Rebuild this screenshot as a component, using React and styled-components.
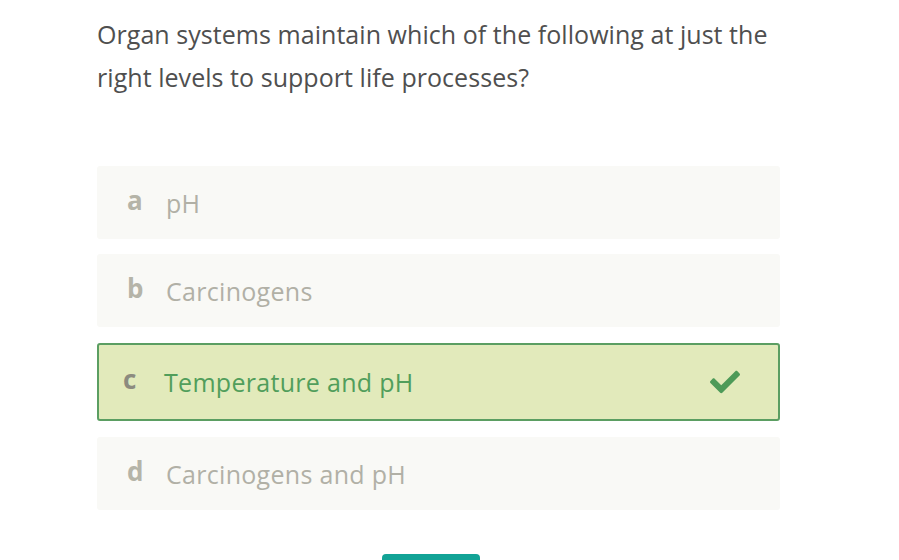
import React from 'react';
import styled, { createGlobalStyle } from 'styled-components';
import { FaCheck } from 'react-icons/fa';

const GlobalStyle = createGlobalStyle`
  html, body {
    margin: 0;
    padding: 0;
    background: #ffffff;
    overflow: hidden;
  }
  body {
    font-family: "Open Sans", Lato, sans-serif;
  }
`;

const Page = styled.div`
  width: 899px;
  height: 560px;
  padding: 13px 0 0 97px;
  box-sizing: border-box;
  position: relative;
  overflow: hidden;
`;

const Question = styled.p`
  margin: 0;
  width: 690px;
  font-size: 25px;
  line-height: 43px;
  letter-spacing: 0.05px;
  color: #4f4f4f;
`;

const Options = styled.ul`
  list-style: none;
  margin: 67px 0 0;
  padding: 0;
  width: 683px;
  display: flex;
  flex-direction: column;
  gap: 15px;
`;

const Option = styled.li`
  display: flex;
  align-items: center;
  box-sizing: border-box;
  height: ${p => (p.$correct ? '78px' : '73px')};
  margin: ${p => (p.$correct ? '1px 0' : '0')};
  padding: ${p => (p.$correct ? '0 38px 0 24px' : '0 30px 0 30px')};
  border-radius: 3px;
  background: ${p => (p.$correct ? '#e2eabb' : '#f9f9f6')};
  border: ${p => (p.$correct ? '2px solid #5b9e62' : 'none')};
`;

const Letter = styled.span`
  width: ${p => (p.$correct ? '41px' : '39px')};
  font-size: 26px;
  font-weight: 700;
  color: ${p => (p.$correct ? '#8c8b7f' : '#b5b4a8')};
  position: relative;
  top: -3px;
`;

const Label = styled.span`
  flex: 1;
  font-size: 25px;
  letter-spacing: 0.3px;
  color: ${p => (p.$correct ? '#519e5b' : '#b1b0a6')};
`;

const Check = styled(FaCheck)`
  color: #4d9a58;
  width: 30px;
  height: 30px;
`;

const SubmitButton = styled.button`
  position: absolute;
  left: 382px;
  top: 554px;
  width: 98px;
  height: 44px;
  border: none;
  border-radius: 4px;
  background: #12a396;
`;

const answers = [
  { letter: 'a', text: 'pH' },
  { letter: 'b', text: 'Carcinogens' },
  { letter: 'c', text: 'Temperature and pH', correct: true },
  { letter: 'd', text: 'Carcinogens and pH' },
];

export default function App() {
  return (
    <>
      <GlobalStyle />
      <Page>
        <Question>
          Organ systems maintain which of the following at just the right levels to support life processes?
        </Question>
        <Options>
          {answers.map(a => (
            <Option key={a.letter} $correct={a.correct}>
              <Letter $correct={a.correct}>{a.letter}</Letter>
              <Label $correct={a.correct}>{a.text}</Label>
              {a.correct && <Check />}
            </Option>
          ))}
        </Options>
        <SubmitButton aria-label="Submit" />
      </Page>
    </>
  );
}
